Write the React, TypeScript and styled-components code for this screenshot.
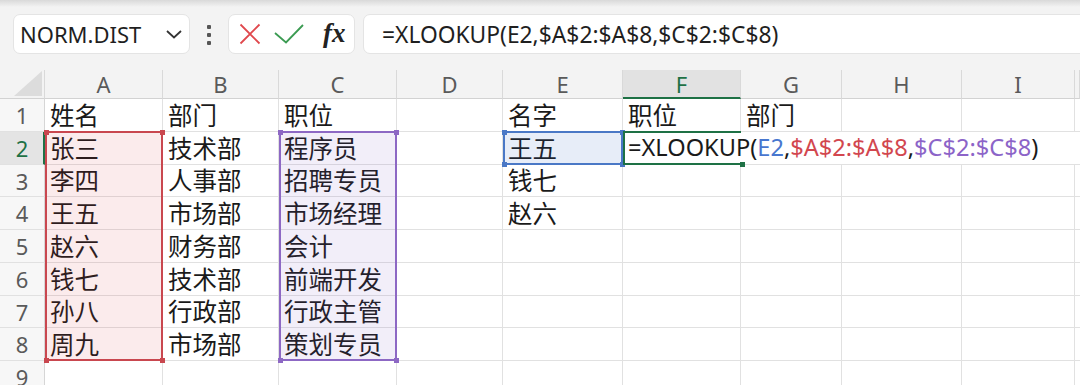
import React from 'react';
import styled, { createGlobalStyle } from 'styled-components';

const Global = createGlobalStyle`
  html, body { margin: 0; padding: 0; background: #ffffff; overflow: hidden; }
  body { font-family: "Noto Sans", "Noto Sans CJK SC", sans-serif; }
  * { box-sizing: border-box; }
`;

const Page = styled.div`
  width: 1080px;
  height: 385px;
  overflow: hidden;
  background: #f3f3f3;
`;

const Toolbar = styled.div`
  height: 70px;
  display: flex;
  align-items: flex-start;
  padding: 14px 0 0 13px;
  background: linear-gradient(#d9d9d9 0px, #f3f3f3 7px);
`;

const Box = styled.div`
  height: 40px;
  background: #ffffff;
  border: 1px solid #e4e4e4;
  border-radius: 7px;
  display: flex;
  align-items: center;
`;

const NameBox = styled(Box)`
  width: 177px;
  padding: 0 6px 0 6px;
  justify-content: space-between;
  font-family: "Noto Sans", sans-serif;
  font-size: 22px;
  color: #1f1f1f;
`;

const Dots = styled.div`
  width: 5px;
  margin: 11px 16px 0 17px;
  display: flex;
  flex-direction: column;
  gap: 4px;
  span {
    width: 4px;
    height: 4px;
    border-radius: 1px;
    background: #555;
  }
`;

const FxBox = styled(Box)`
  width: 127px;
  padding-left: 9px;
`;

const IconSlot = styled.div<{ $w: number }>`
  width: ${(p) => p.$w}px;
  display: flex;
  align-items: center;
  justify-content: center;
`;

const FxText = styled.span`
  font-family: "Liberation Serif", "DejaVu Serif", serif;
  font-style: italic;
  font-weight: bold;
  font-size: 27px;
  color: #222;
  line-height: 1;
  margin-left: 7px;
  margin-top: -2px;
`;

const FormulaBar = styled(Box)`
  flex: 1;
  margin-left: 8px;
  margin-right: -20px;
  padding-left: 18px;
  font-family: "Noto Sans", sans-serif;
  font-size: 22.8px;
  color: #1f1f1f;
`;

const Grid = styled.div`
  display: grid;
  grid-template-columns: 45px 118px 116px 118px 106px 120px 118px 101px 120px 1fr;
  grid-template-rows: 29px 33px 33px 32px 33px 33px 33px 32px 33px 33px;
  background: #ffffff;
`;

const Corner = styled.div`
  grid-column: 1;
  grid-row: 1;
  background: #f3f3f3;
  border-bottom: 1px solid #d2d2d2;
  border-right: 1px solid #d9d9d9;
  display: flex;
  align-items: flex-end;
  justify-content: flex-end;
  padding: 0 2px 2px 0;
`;

const ColHead = styled.div<{ $c: number; $active?: boolean }>`
  grid-row: 1;
  grid-column: ${(p) => p.$c};
  background: ${(p) => (p.$active ? '#e2e2e2' : '#f3f3f3')};
  border-right: 1px solid #d9d9d9;
  border-bottom: ${(p) => (p.$active ? '2px solid #1e7145' : '1px solid #d2d2d2')};
  display: flex;
  align-items: center;
  justify-content: center;
  font-size: 22px;
  color: ${(p) => (p.$active ? '#1e7145' : '#5a5a5a')};
  padding-top: ${(p) => (p.$active ? '1px' : '0')};
`;

const RowHead = styled.div<{ $r: number; $active?: boolean }>`
  grid-column: 1;
  grid-row: ${(p) => p.$r};
  background: ${(p) => (p.$active ? '#e4e4e4' : '#f7f7f7')};
  border-right: ${(p) => (p.$active ? '2px solid #1e7145' : '1px solid #d6d6d6')};
  border-bottom: 1px solid #e1e1e1;
  display: flex;
  align-items: center;
  justify-content: center;
  font-size: 22px;
  color: ${(p) => (p.$active ? '#1e7145' : '#5a5a5a')};
  padding-left: ${(p) => (p.$active ? '1px' : '0')};
`;

const Cell = styled.div<{ $r: number; $c: number; $span?: number; $noRight?: boolean }>`
  grid-row: ${(p) => p.$r};
  grid-column: ${(p) => p.$c} / span ${(p) => p.$span ?? 1};
  border-right: ${(p) => (p.$noRight ? 'none' : '1px solid #e1e1e1')};
  border-bottom: 1px solid #e1e1e1;
  display: flex;
  align-items: center;
  padding-left: 5px;
  font-family: "Noto Sans CJK SC", "Noto Sans", sans-serif;
  font-size: 24.5px;
  color: #1a1a1a;
  white-space: nowrap;
  line-height: 1;
`;

const FormulaCell = styled(Cell)`
  font-family: "Noto Sans", "Noto Sans CJK SC", sans-serif;
  font-size: 23.6px;
`;

const Overlay = styled.div<{
  $col: number;
  $r1: number;
  $r2: number;
  $color: string;
  $fill: string;
}>`
  grid-column: ${(p) => p.$col};
  grid-row: ${(p) => p.$r1} / ${(p) => p.$r2};
  margin: -1px 0 0 0;
  border: 2px solid ${(p) => p.$color};
  background: ${(p) => p.$fill};
  position: relative;
  pointer-events: none;
  z-index: 2;
`;

const EditOverlay = styled.div`
  grid-column: 7;
  grid-row: 3;
  margin: -1px 0 0 0;
  border-top: 2px solid #1e7145;
  border-bottom: 2px solid #1e7145;
  border-left: 2px solid #1e7145;
  position: relative;
  pointer-events: none;
  z-index: 3;
`;

const Handle = styled.span<{ $color: string; $x: 'l' | 'r'; $y: 't' | 'b' }>`
  position: absolute;
  width: 5px;
  height: 5px;
  background: ${(p) => p.$color};
  ${(p) => (p.$x === 'l' ? 'left: -3.5px;' : 'right: -3.5px;')}
  ${(p) => (p.$y === 't' ? 'top: -3.5px;' : 'bottom: -3.5px;')}
`;

const Ref = styled.span<{ $c: string }>`
  color: ${(p) => p.$c};
`;

const cols = ['A', 'B', 'C', 'D', 'E', 'F', 'G', 'H', 'I', ''];

const rows: string[][] = [
  ['姓名', '部门', '职位', '', '名字', '职位', '部门', '', '', ''],
  ['张三', '技术部', '程序员', '', '王五'],
  ['李四', '人事部', '招聘专员', '', '钱七', '', '', '', '', ''],
  ['王五', '市场部', '市场经理', '', '赵六', '', '', '', '', ''],
  ['赵六', '财务部', '会计', '', '', '', '', '', '', ''],
  ['钱七', '技术部', '前端开发', '', '', '', '', '', '', ''],
  ['孙八', '行政部', '行政主管', '', '', '', '', '', '', ''],
  ['周九', '市场部', '策划专员', '', '', '', '', '', '', ''],
  ['', '', '', '', '', '', '', '', '', ''],
];

const Handles = ({ color }: { color: string }) => (
  <>
    <Handle $color={color} $x="l" $y="t" />
    <Handle $color={color} $x="r" $y="t" />
    <Handle $color={color} $x="l" $y="b" />
    <Handle $color={color} $x="r" $y="b" />
  </>
);

export default function App() {
  return (
    <Page>
      <Global />
      <Toolbar>
        <NameBox>
          <span>NORM.DIST</span>
          <svg width="18" height="10" viewBox="0 0 18 10">
            <path d="M2 2 L9 8.5 L16 2" fill="none" stroke="#333" strokeWidth="1.8" />
          </svg>
        </NameBox>
        <Dots>
          <span />
          <span />
          <span />
        </Dots>
        <FxBox>
          <IconSlot $w={24}>
            <svg width="22" height="22" viewBox="0 0 22 22">
              <path d="M1.5 1.5 L20.5 20.5 M20.5 1.5 L1.5 20.5" stroke="#e0484d" strokeWidth="1.8" fill="none" />
            </svg>
          </IconSlot>
          <IconSlot $w={54}>
            <svg width="30" height="20" viewBox="0 0 30 20">
              <path d="M1 9 L12 18.5 L29 1" stroke="#3b9b52" strokeWidth="1.8" fill="none" />
            </svg>
          </IconSlot>
          <FxText>fx</FxText>
        </FxBox>
        <FormulaBar>
          <span>=XLOOKUP(E2,$A$2:$A$8,$C$2:$C$8)</span>
        </FormulaBar>
      </Toolbar>
      <Grid>
        <Corner>
          <svg width="28" height="25" viewBox="0 0 28 25">
            <polygon points="28,0 28,25 0,25" fill="#dcdcdc" />
          </svg>
        </Corner>
        {cols.map((c, ci) => (
          <ColHead key={ci} $c={ci + 2} $active={c === 'F'}>
            {c}
          </ColHead>
        ))}
        {rows.map((r, ri) => (
          <React.Fragment key={ri}>
            <RowHead $r={ri + 2} $active={ri === 1}>
              {ri + 1}
            </RowHead>
            {r.map((v, ci) => (
              <Cell key={ci} $r={ri + 2} $c={ci + 2} $noRight={ci === 9}>
                {v}
              </Cell>
            ))}
            {ri === 1 && (
              <FormulaCell $r={3} $c={7} $span={5} $noRight>
                =XLOOKUP(<Ref $c="#4877cf">E2</Ref>,<Ref $c="#d2474f">$A$2:$A$8</Ref>,
                <Ref $c="#8c64c8">$C$2:$C$8</Ref>)
              </FormulaCell>
            )}
          </React.Fragment>
        ))}
        <Overlay $col={2} $r1={3} $r2={10} $color="#c9474f" $fill="rgba(214, 60, 70, 0.1)">
          <Handles color="#c9474f" />
        </Overlay>
        <Overlay $col={4} $r1={3} $r2={10} $color="#8d68c4" $fill="rgba(130, 90, 200, 0.1)">
          <Handles color="#8d68c4" />
        </Overlay>
        <Overlay $col={6} $r1={3} $r2={4} $color="#4a78c6" $fill="rgba(60, 110, 200, 0.12)">
          <Handles color="#4a78c6" />
        </Overlay>
        <EditOverlay>
          <Handle $color="#1e7145" $x="r" $y="b" />
        </EditOverlay>
      </Grid>
    </Page>
  );
}
